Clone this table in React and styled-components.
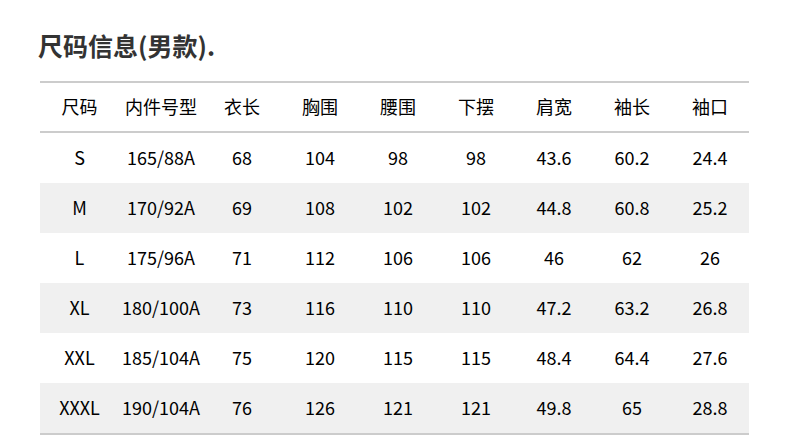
import React from 'react';
import styled, { createGlobalStyle } from 'styled-components';

const GlobalStyle = createGlobalStyle`
  body {
    margin: 0;
    background: #ffffff;
    font-family: "Noto Sans CJK SC", "Noto Sans", sans-serif;
  }
`;

const columns = ['尺码', '内件号型', '衣长', '胸围', '腰围', '下摆', '肩宽', '袖长', '袖口'];
const widths = [79, 84, 78, 78, 78, 78, 78, 78, 78];

const rows = [
  ['S', '165/88A', '68', '104', '98', '98', '43.6', '60.2', '24.4'],
  ['M', '170/92A', '69', '108', '102', '102', '44.8', '60.8', '25.2'],
  ['L', '175/96A', '71', '112', '106', '106', '46', '62', '26'],
  ['XL', '180/100A', '73', '116', '110', '110', '47.2', '63.2', '26.8'],
  ['XXL', '185/104A', '75', '120', '115', '115', '48.4', '64.4', '27.6'],
  ['XXXL', '190/104A', '76', '126', '121', '121', '49.8', '65', '28.8'],
];

const SizeChart = () => {
  return (
    <Page>
      <Title>尺码信息(男款).</Title>
      <Table>
        <colgroup>
          {widths.map((w, i) => (
            <col key={i} style={{ width: w }} />
          ))}
        </colgroup>
        <thead>
          <tr>
            {columns.map((c) => (
              <Head key={c}>{c}</Head>
            ))}
          </tr>
        </thead>
        <tbody>
          {rows.map((r, i) => (
            <Row key={r[0]} $shaded={i % 2 === 1}>
              {r.map((v, j) => (
                <Cell key={j}>{v}</Cell>
              ))}
            </Row>
          ))}
        </tbody>
      </Table>
    </Page>
  );
};

const Page = styled.div`
  padding: 28px 40px 0;
  width: 710px;
`;

const Title = styled.h1`
  margin: 0 0 0 -2px;
  font-size: 25px;
  font-weight: 700;
  line-height: 34px;
  color: #333333;
`;

const Table = styled.table`
  margin-top: 19px;
  width: 709px;
  border-collapse: collapse;
  table-layout: fixed;
  border-top: 2px solid #cccccc;
  border-bottom: 2px solid #cccccc;
  thead tr {
    border-bottom: 2px solid #cccccc;
  }
`;

const Head = styled.th`
  height: 45px;
  padding: 0 0 3px;
  font-size: 18px;
  line-height: 24px;
  font-weight: 400;
  color: #000000;
  text-align: center;
`;

const Row = styled.tr`
  background: ${(p) => (p.$shaded ? '#f0f0f0' : '#ffffff')};
`;

const Cell = styled.td`
  height: 47px;
  padding: 0 0 3px;
  font-size: 18px;
  line-height: 24px;
  color: #000000;
  text-align: center;
  white-space: nowrap;
`;

export default function App() {
  return (
    <>
      <GlobalStyle />
      <SizeChart />
    </>
  );
}
